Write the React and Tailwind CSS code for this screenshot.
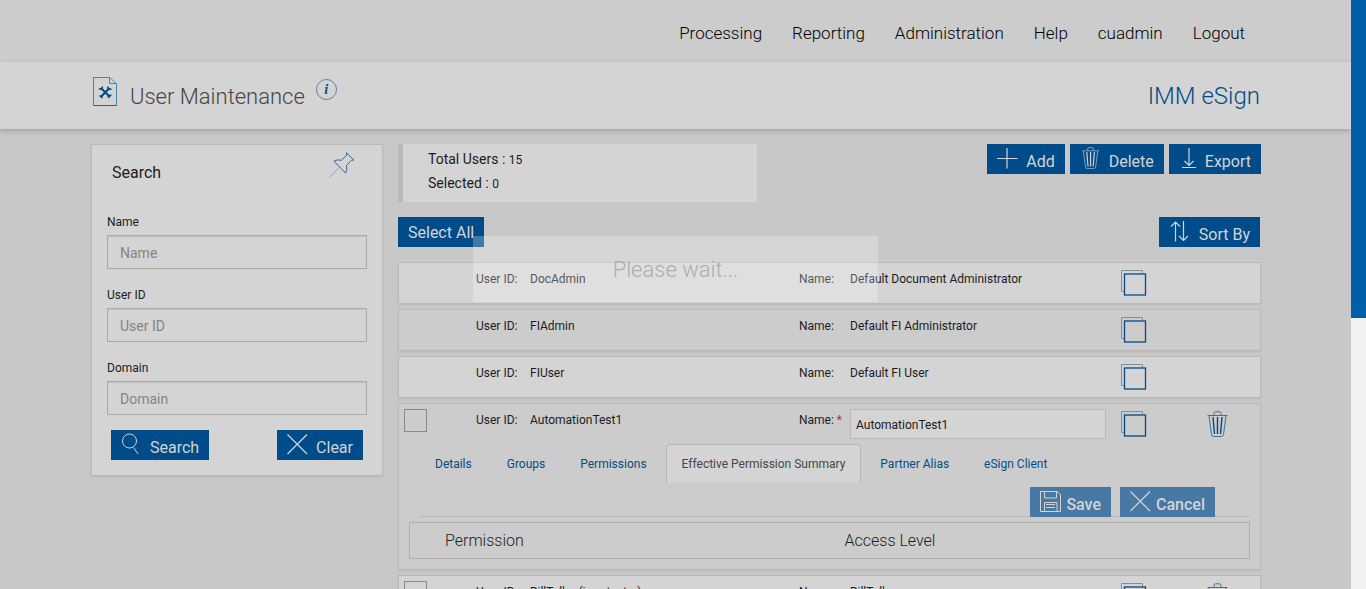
import React from "react";

const NAV = ["Processing", "Reporting", "Administration", "Help", "cuadmin", "Logout"];
const TABS = ["Details", "Groups", "Permissions", "Effective Permission Summary", "Partner Alias", "eSign Client"];

function Icon({ children, className = "size-[26px]", box = "0 0 26 26", width = 1 }) {
  return (
    <svg className={"shrink-0 " + className} viewBox={box} fill="none" stroke="currentColor" strokeWidth={width} aria-hidden="true">
      {children}
    </svg>
  );
}

const SearchIcon = () => (
  <Icon className="size-[22px]" box="0 0 22 22">
    <circle cx="8.5" cy="8" r="7" />
    <path d="M12.5 14.5 17 21" />
  </Icon>
);
const CrossIcon = () => (
  <Icon className="size-[22px]" box="0 0 22 22" width={1.2}>
    <path d="M0.5 1.5 20 21M20 1.5 0.5 21" />
  </Icon>
);
const PlusIcon = () => (
  <Icon className="size-[22px]" box="0 0 22 22" width={1.2}>
    <path d="M10 1V21.500M0 11.500H20.500" />
  </Icon>
);
const ExportIcon = () => (
  <Icon className="size-[22px]" box="0 0 22 22" width={1.2}>
    <path d="M10 1V18.500M5.500 14 10 18.500 14.500 14M3 20.500H17" />
  </Icon>
);
const SortIcon = () => (
  <Icon className="size-[22px]" box="0 0 22 22" width={1.2}>
    <path d="M6.5 21.5V2M2 6.5 6.5 2 11 6.5M14.500 1V20.500M10 16 14.500 20.500 19 16" />
  </Icon>
);
const SaveIcon = () => (
  <Icon className="size-[22px]" box="0 0 22 22">
    <path d="M0.5 1.5H17.5L20.5 4.5V21.500H0.5ZM4.5 1.5V8H16.5V1.5M4.5 21.5V12.5H17V21.5M6 14.500H15M6 17.500H15" />
  </Icon>
);
const TrashIcon = ({ className = "size-[22px]" }) => (
  <Icon className={className} box="0 0 22 26">
    <g opacity="0.7">
      <path d="M0.5 4.5H20.5M7 4V2.5Q7 0.8 8.700 0.8H12.300Q14 0.8 14 2.500V4" />
      <path d="M2 5 4.500 23.500Q4.700 25.500 6.500 25.500H14.500Q16.300 25.500 16.500 23.500L19 5" />
    </g>
    <path d="M6 6 7.500 23M10.500 6V23M15 6 13.500 23" strokeWidth="1.4" />
  </Icon>
);
const CopyIcon = () => (
  <Icon className="h-[26px] w-[26px] text-[#004c8a]">
    <path d="M3.5 21.5H0.5V0.5H21.5V3.5" stroke="#7e909b" />
    <rect x="3.5" y="4" width="21" height="21" strokeWidth="1.3" />
  </Icon>
);

function Button({ icon, children, muted, gap = "gap-2" }) {
  return (
    <button
      type="button"
      className={"flex h-[30px] items-start px-[10px] text-base text-[#d4d4d4] " + gap + " " + (muted ? "bg-[#4878a4] font-medium" : "bg-[#004c8a]")}
    >
      {icon && <span className="pt-[3px]">{icon}</span>}
      <span className={icon ? "pt-[6px]" : "pt-1"}>{children}</span>
    </button>
  );
}

function Field({ label }) {
  const id = label.toLowerCase().replace(" ", "-");
  return (
    <div className="mb-[18px]">
      <label htmlFor={id} className="block text-xs leading-4">{label}</label>
      <input
        id={id}
        placeholder={label}
        className="mt-[5px] block h-[34px] w-full border border-[#a9a9a9] bg-transparent px-3 pt-[2px] text-sm shadow-[inset_0_1px_1px_rgba(0,0,0,0.08)] outline-none placeholder:text-[#848484]"
      />
    </div>
  );
}

function UserRow({ id, name, shaded, selectable, required, editable, children }) {
  return (
    <li className={"border border-[#b9b9b9] shadow-[0_1px_2px_rgba(0,0,0,0.08)] " + (shaded ? "bg-[#cccccc]" : "bg-[#d4d4d4]")}>
      <div className="grid min-h-10 grid-cols-[77px_54px_minmax(0,269fr)_51px_minmax(0,271fr)_86px_53px] text-xs leading-4">
        <div className="pt-[5px] pl-[5px]">
          {selectable && (
            <input type="checkbox" aria-label={"Select " + id} className="block size-[23px] appearance-none border border-[#8a8a8a]" />
          )}
        </div>
        <span className="pt-2">User ID:</span>
        <span className="pt-2">{id}</span>
        <label htmlFor={"name-" + id} className="pt-2 whitespace-nowrap">
          Name:{required && <span className="text-[#d4202a]"> *</span>}
        </label>
        {editable ? (
          <div className="pt-[5px] pr-[15px]">
            <input
              id={"name-" + id}
              defaultValue={name}
              className="block h-[30px] w-full border border-[#b9b9b9] bg-[#d4d4d4] px-[5px] pt-[2px] text-xs outline-none"
            />
          </div>
        ) : (
          <output id={"name-" + id} className="pt-2">{name}</output>
        )}
        <div className="pt-[7px]">
          <button type="button" aria-label={"Copy " + id} className="block"><CopyIcon /></button>
        </div>
        <div className="pt-[7px]">
          {selectable && (
            <button type="button" aria-label={"Delete " + id} className="block text-[#004c8a]">
              <TrashIcon className="h-[26px] w-[22px]" />
            </button>
          )}
        </div>
      </div>
      {children}
    </li>
  );
}

function PermissionSummary() {
  return (
    <div className="pb-[10px]">
      <div role="tablist" className="flex gap-[3px] pl-5">
        {TABS.map((tab) => {
          const active = tab === "Effective Permission Summary";
          return (
            <button
              key={tab}
              type="button"
              role="tab"
              aria-selected={active}
              className={
                "h-[39px] rounded-t border border-b-0 px-[15px] text-xs whitespace-nowrap " +
                (active ? "border-[#b6b6b6] bg-[#d4d4d4] text-[#464646]" : "border-transparent text-[#004c8a]")
              }
            >
              {tab}
            </button>
          );
        })}
      </div>
      <div className="mr-[10px] ml-5 border-b border-[#b9b9b9] pt-1 pr-[35px]">
        <div className="-mb-px flex justify-end gap-[9px]">
          <Button icon={<SaveIcon />} muted gap="gap-1">Save</Button>
          <Button icon={<CrossIcon />} muted gap="gap-1">Cancel</Button>
        </div>
      </div>
      <div className="mx-[10px] mt-[5px] border border-[#b0b0b0]">
        <table className="w-full table-fixed text-left text-base font-light">
          <thead>
            <tr className="h-[35px]">
              <th className="pl-[35px] font-light">Permission</th>
              <th className="pl-[15px] font-light">Access Level</th>
            </tr>
          </thead>
        </table>
      </div>
    </div>
  );
}

export default function App() {
  return (
    <div className="flex h-screen overflow-hidden bg-[#c8c8c8] font-['Roboto',sans-serif] text-[#1c1c1c]">
      <div className="min-w-0 flex-1 overflow-hidden">
        <header>
          <div className="bg-[#cccccc]">
            <nav className="mx-auto flex h-[62px] max-w-[1171px] items-center justify-end gap-[30px] pt-[6px] pr-4 text-[17px] font-light text-black">
              {NAV.map((item) => <a key={item} href="#">{item}</a>)}
            </nav>
          </div>
          <div className="bg-[#d4d4d4] shadow-[0_2px_5px_rgba(0,0,0,0.2)]">
            <div className="mx-auto flex h-[67px] max-w-[1171px] items-center px-px">
              <svg className="mr-3 mb-2 ml-[2px] h-[30px] w-[25px] shrink-0" viewBox="0 0 25 30" fill="none" aria-hidden="true">
                <path d="M17 0.5H0.5V28.5H23.5V7Z" stroke="#3f86b0" />
                <path d="M0.5 28.5H23.5" stroke="#1d629b" />
                <path d="M16.5 0.5V6.5H23.5" stroke="#4c80a5" />
                <path d="M8 11 17 20M16.5 11 8 19.8" stroke="#004c8a" strokeWidth="2" />
                <path d="M6 11.5Q9 13.5 9.5 9.5M15 9.5Q14.5 13 18.5 12M15.5 21Q15 17.500 18.500 18.500M6.500 18.500 9.500 21" stroke="#004c8a" strokeWidth="1.6" />
              </svg>
              <h1 className="pt-[2px] text-[22px] font-light text-[#464646]">User Maintenance</h1>
              <button type="button" aria-label="Information" className="mb-3 ml-[11px] flex size-[21px] items-center justify-center rounded-full border border-[#5b7f9f] font-['Liberation_Serif',serif] text-sm font-bold text-[#004c8a] italic">
                i
              </button>
              <span className="ml-auto text-2xl font-light text-[#004c8a]">IMM eSign</span>
            </div>
          </div>
        </header>

        <main className="mx-auto mt-[15px] flex max-w-[1171px] items-start gap-[15px] pl-px">
          <form className="w-[292px] shrink-0 border border-[#b9b9b9] bg-[#d4d4d4] px-[15px] pb-[15px] shadow-[0_1px_2px_rgba(0,0,0,0.08)]" onSubmit={(e) => e.preventDefault()}>
            <div className="mb-[29px] flex items-start justify-between pt-[7px] pr-3 pl-[5px]">
              <h2 className="pt-[9px] text-base">Search</h2>
              <button type="button" aria-label="Pin search">
                <svg className="block size-[26px]" viewBox="0 0 26 26" fill="none" stroke="#2c6698" aria-hidden="true">
                  <path d="M17.500 0.800 24.800 8 22.500 8.200 17.500 13.500Q18.800 17.500 16.500 21L5 9.200Q8.500 7 12.300 8.300L17.600 3.300Z" />
                  <path d="M10.500 15 0.500 25.500" stroke="#8fa3b3" />
                </svg>
              </button>
            </div>
            <Field label="Name" />
            <Field label="User ID" />
            <Field label="Domain" />
            <div className="-mt-[3px] flex justify-between px-1">
              <Button icon={<SearchIcon />} gap="gap-[7px]">Search</Button>
              <Button icon={<CrossIcon />} gap="gap-[7px]">Clear</Button>
            </div>
          </form>

          <section className="min-w-0 flex-1">
            <div className="flex items-start justify-between">
              <div className="h-[58px] w-[359px] border-l-[5px] border-[#b9b9b9] bg-[#d4d4d4] pt-[3px] pl-[25px] text-sm leading-6">
                <p>Total Users : <span className="text-xs">15</span></p>
                <p>Selected : <span className="text-xs">0</span></p>
              </div>
              <div className="flex gap-[5px]">
                <Button icon={<PlusIcon />} gap="gap-[7px]">Add</Button>
                <Button icon={<TrashIcon />} gap="gap-[7px]">Delete</Button>
                <Button icon={<ExportIcon />} gap="gap-1">Export</Button>
              </div>
            </div>
            <div className="mt-[15px] flex justify-between pr-px">
              <Button>Select All</Button>
              <Button icon={<SortIcon />}>Sort By</Button>
            </div>
            <ul className="mt-[15px] flex flex-col gap-[5px]">
              <UserRow id="DocAdmin" name="Default Document Administrator" />
              <UserRow id="FIAdmin" name="Default FI Administrator" shaded />
              <UserRow id="FIUser" name="Default FI User" />
              <UserRow id="AutomationTest1" name="AutomationTest1" shaded selectable required editable>
                <PermissionSummary />
              </UserRow>
              <UserRow id="BillTeller (immtester)" name="BillTeller" selectable />
            </ul>
          </section>
        </main>
      </div>

      <div className="w-[15px] shrink-0 bg-[#f1f1f1]">
        <div className="h-[54%] bg-[#005eaa]" />
      </div>

      <div role="status" className="absolute top-[40%] left-1/2 flex h-[66px] w-[405px] -translate-x-[210px] items-center justify-center bg-white/25 pt-[2px] text-[22px] font-light text-[#adadad]">
        Please wait...
      </div>
    </div>
  );
}
